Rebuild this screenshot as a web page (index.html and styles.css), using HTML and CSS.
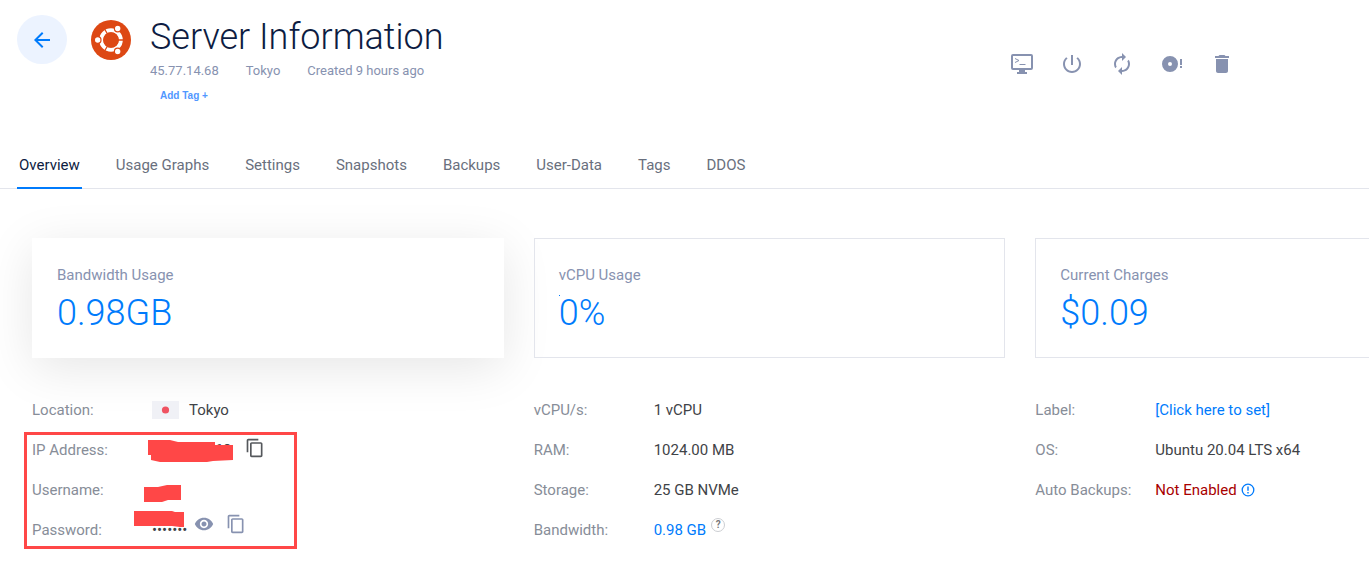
FILE: index.html
```html
<!DOCTYPE html>
<html lang="en">
<head>
<meta charset="utf-8">
<title>Server Information</title>
<link rel="stylesheet" href="styles.css">
</head>
<body>
<header class="header">
  <button class="back" type="button" aria-label="Back">
    <svg width="24" height="24" viewBox="0 0 24 24"><path fill="currentColor" d="M20 11H7.830l5.590-5.590L12 4l-8 8 8 8 1.410-1.410L7.830 13H20z"/></svg>
  </button>
  <svg class="logo" width="40" height="40" viewBox="0 0 40 40" aria-hidden="true">
    <circle cx="20" cy="20" r="20" fill="#dd4814"/>
    <circle cx="20" cy="20" r="9.800" fill="none" stroke="#fff" stroke-width="4"/>
    <path d="M20 20h13M20 20l-7-12M20 20l-7 12" stroke="#dd4814" stroke-width="1.300"/>
    <circle cx="20" cy="20" r="7.800" fill="#dd4814"/>
    <g fill="#fff" stroke="#dd4814" stroke-width="1.200"><circle cx="6.700" cy="20" r="3.300"/><circle cx="26.700" cy="8.500" r="3.300"/><circle cx="26.700" cy="31.500" r="3.300"/></g>
  </svg>
  <div class="heading">
    <h1 class="title">Server Information</h1>
    <div class="meta"><span>45.77.14.68</span><span>Tokyo</span><span>Created 9 hours ago</span></div>
    <button class="add-tag" type="button">Add Tag +</button>
  </div>
  <div class="actions">
    <button class="icon-button" type="button" aria-label="View console"><svg width="24" height="24" viewBox="0 0 24 24"><path fill="currentColor" fill-rule="evenodd" d="M3 2h18q2 0 2 2v12q0 2-2 2h-6v2h2v2H7v-2h2v-2H3q-2 0-2-2V4q0-2 2-2zM3 4v12h18V4z"/><path d="M5 6.500l4 2-4 2M9.500 12.500h6" fill="none" stroke="currentColor" stroke-width="1"/></svg></button>
    <button class="icon-button" type="button" aria-label="Stop server"><svg width="24" height="24" viewBox="0 0 24 24"><path fill="currentColor" d="M13 3h-2v10h2V3zm4.830 2.170l-1.420 1.420C17.990 7.860 19 9.810 19 12c0 3.870-3.130 7-7 7s-7-3.130-7-7c0-2.190 1.010-4.140 2.580-5.420L6.170 5.170C4.230 6.820 3 9.260 3 12c0 4.970 4.030 9 9 9s9-4.030 9-9c0-2.740-1.230-5.180-3.170-6.830z"/></svg></button>
    <button class="icon-button" type="button" aria-label="Restart server"><svg width="24" height="24" viewBox="0 0 24 24"><path fill="currentColor" d="M12 6v3l4-4-4-4v3c-4.420 0-8 3.580-8 8 0 1.570.46 3.030 1.240 4.260L6.700 14.800A5.870 5.870 0 0 1 6 12c0-3.310 2.690-6 6-6zm6.760 1.740L17.300 9.200c.44.840.7 1.790.7 2.800 0 3.310-2.690 6-6 6v-3l-4 4 4 4v-3c4.420 0 8-3.580 8-8 0-1.570-.46-3.030-1.240-4.260z"/></svg></button>
    <button class="icon-button" type="button" aria-label="Reinstall server"><svg width="24" height="24" viewBox="0 0 24 24"><path fill="currentColor" fill-rule="evenodd" d="M10 4a8 8 0 1 0 0 16 8 8 0 0 0 0-16zm0 6a2 2 0 1 1 0 4 2 2 0 0 1 0-4zM20 7h2v6h-2zM20 14h2v2h-2z"/></svg></button>
    <button class="icon-button" type="button" aria-label="Destroy server"><svg width="24" height="24" viewBox="0 0 24 24"><path fill="currentColor" d="M6 19c0 1.100.9 2 2 2h8c1.100 0 2-.9 2-2V7H6v12zM19 4h-3.500l-1-1h-5l-1 1H5v2h14V4z"/></svg></button>
  </div>
</header>

<nav class="tabs">
  <a class="tab tab-active" href="#overview">Overview</a>
  <a class="tab" href="#graphs">Usage Graphs</a>
  <a class="tab" href="#settings">Settings</a>
  <a class="tab" href="#snapshots">Snapshots</a>
  <a class="tab" href="#backups">Backups</a>
  <a class="tab" href="#userdata">User-Data</a>
  <a class="tab" href="#tags">Tags</a>
  <a class="tab" href="#ddos">DDOS</a>
</nav>

<main class="content">
  <section class="card card-raised"><h2 class="card-label">Bandwidth Usage</h2><p class="card-value">0.98GB</p></section>
  <section class="card"><h2 class="card-label">vCPU Usage</h2><p class="card-value"><span class="spark"></span>0%</p></section>
  <section class="card"><h2 class="card-label">Current Charges</h2><p class="card-value">$0.09</p></section>

  <div class="column">
    <dl class="details">
      <dt>Location:</dt><dd><svg class="flag" width="27" height="18" viewBox="0 0 27 18" aria-hidden="true"><path fill="#f0f1f6" d="M0 0h27v18H0z"/><circle cx="13.500" cy="9" r="3.600" fill="#ef5261"/></svg>Tokyo</dd>
      <dt>IP Address:</dt><dd>45.77.14.68<button class="copy copy-dark" type="button" aria-label="Copy IP address"><svg width="20" height="20" viewBox="0 0 24 24"><path fill="currentColor" d="M16 1H4c-1.100 0-2 .9-2 2v14h2V3h12V1zm3 4H8c-1.100 0-2 .9-2 2v14c0 1.100.9 2 2 2h11c1.100 0 2-.9 2-2V7c0-1.100-.9-2-2-2zm0 16H8V7h11v14z"/></svg></button></dd>
      <dt>Username:</dt><dd></dd>
      <dt>Password:</dt><dd>•••••••<button class="copy show" type="button" aria-label="Show password"><svg width="20" height="20" viewBox="0 0 24 24"><path fill="currentColor" d="M12 4.500C7 4.500 2.730 7.610 1 12c1.730 4.390 6 7.500 11 7.500s9.270-3.110 11-7.500c-1.730-4.390-6-7.500-11-7.500zM12 17c-2.760 0-5-2.240-5-5s2.240-5 5-5 5 2.240 5 5-2.240 5-5 5zm0-8c-1.660 0-3 1.340-3 3s1.340 3 3 3 3-1.340 3-3-1.340-3-3-3z"/></svg></button><button class="copy" type="button" aria-label="Copy password"><svg width="20" height="20" viewBox="0 0 24 24"><path fill="currentColor" d="M16 1H4c-1.100 0-2 .9-2 2v14h2V3h12V1zm3 4H8c-1.100 0-2 .9-2 2v14c0 1.100.9 2 2 2h11c1.100 0 2-.9 2-2V7c0-1.100-.9-2-2-2zm0 16H8V7h11v14z"/></svg></button></dd>
    </dl>
    <svg class="marks" width="273" height="117" viewBox="24 432 273 117" aria-hidden="true">
      <path fill="none" stroke="#ff4747" stroke-width="3" d="M25.500 433.500h270v114h-270z"/>
      <path fill="#ff4747" d="M148 440h22l8 2h37v3h18v15l-20 1-6 1h-47l-9-2v-5h-3zM144 487h14l9-2h14v15h-13l-6 2h-18zM134 511h38l3 1h9v15h-4l-8-1h-38z"/>
    </svg>
  </div>
  <dl class="details">
    <dt>vCPU/s:</dt><dd>1 vCPU</dd>
    <dt>RAM:</dt><dd>1024.00 MB</dd>
    <dt>Storage:</dt><dd>25 GB NVMe</dd>
    <dt>Bandwidth:</dt><dd><a href="#bandwidth">0.98 GB</a><button class="help" type="button">?</button></dd>
  </dl>
  <dl class="details">
    <dt>Label:</dt><dd><a href="#label">[Click here to set]</a></dd>
    <dt>OS:</dt><dd>Ubuntu 20.04 LTS x64</dd>
    <dt>Auto Backups:</dt><dd class="off">Not Enabled<a class="notice" href="#backups" aria-label="Enable backups"><svg width="14" height="14" viewBox="0 0 14 14"><circle cx="7" cy="7" r="5.800" fill="none" stroke="currentColor" stroke-width="1.300"/><path fill="currentColor" d="M6.300 3.500h1.400v4.300H6.300zM6.300 9h1.400v1.500H6.300z"/></svg></a></dd>
  </dl>
</main>
</body>
</html>
```
FILE: styles.css
```css
* { box-sizing: border-box; }
body {
  margin: 0;
  background: #fff;
  color: #3f4347;
  font: 15px/20px Roboto, "Liberation Sans", sans-serif;
  overflow-x: hidden;
}
button { margin: 0; padding: 0; border: 0; background: none; font: inherit; cursor: pointer; }
svg { display: block; }
a { color: #007bfc; text-decoration: none; }
h1, h2, p, dl, dd { margin: 0; }

.header { display: flex; align-items: flex-start; padding: 15px 135px 0 17px; height: 142px; }
.back { display: grid; place-items: center; width: 50px; height: 49px; border-radius: 50%; background: #ecf3ff; color: #007bfc; }
.logo { margin: 5px 19px 0 24px; }
.heading { flex: 1; }
.title { color: #0d1c42; font-size: 36px; font-weight: 300; line-height: 44px; }
.meta { display: flex; gap: 27px; margin-top: 2px; color: #8792b0; font-size: 13px; }
.add-tag { display: block; margin-top: 5px; padding: 0 10px; color: #5197ff; font-family: "Liberation Sans", Arial, sans-serif; font-size: 10px; font-weight: 700; line-height: 20px; }
.actions { display: flex; gap: 26px; margin-top: 37px; color: #8792b0; }
.icon-button { color: inherit; }

.tabs { display: flex; gap: 32px; padding-left: 17px; border-bottom: 1px solid #e3e5ec; }
.tab { margin-bottom: -1px; padding: 13px 2px 12px; border-bottom: 2px solid transparent; color: #696f7d; line-height: 20px; }
.tab-active { border-color: #007bfc; color: #0d1c42; }

.content { display: grid; grid-template-columns: repeat(3, 1fr); gap: 32px 30px; margin: 49px -138px 0 32px; }
.card { min-height: 120px; padding: 26px 24px 0; border: 1px solid #e3e5ec; }
.card-raised { border-color: transparent; background: #fff; box-shadow: 0 10px 50px rgba(0, 0, 0, .1); }
.card-label { color: #8792b0; font-size: 15px; font-weight: 400; line-height: 20px; }
.card-value { position: relative; margin-top: 6px; color: #007bfc; font-size: 36px; font-weight: 300; line-height: 44px; }
.spark { position: absolute; top: 4px; left: 0; width: 1px; height: 1px; background: #007bfc; }

.column { position: relative; }
.details { display: grid; grid-template-columns: 120px 1fr; grid-auto-rows: 40px; align-items: center; }
.details dt { color: #878d98; }
.details dd { display: flex; align-items: center; }
.flag { margin-right: 10px; }
.copy { margin: 0 0 12px 12px; color: #8792b0; }
.copy-dark { margin: 0 0 4px 14px; color: #55585c; }
.show { margin-left: 7px; }
.help { width: 14px; height: 14px; margin: 0 0 10px 5px; border: 1px solid #ccced2; border-radius: 50%; color: #777; font-size: 10px; font-weight: 700; line-height: 12px; }
.details .off { color: #a80000; }
.notice { margin-left: 4px; }
.marks { position: absolute; top: 42px; left: -8px; }
```
